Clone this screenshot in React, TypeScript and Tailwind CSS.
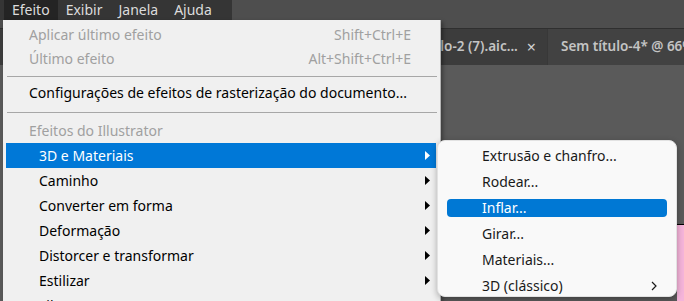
import type { ReactNode } from 'react';

const topMenus = ['Efeito', 'Exibir', 'Janela', 'Ajuda'];

const illustratorItems = [
  'Caminho',
  'Converter em forma',
  'Deformação',
  'Distorcer e transformar',
  'Estilizar',
  'Filtros SVG',
];

const subItems = ['Extrusão e chanfro...', 'Rodear...', 'Inflar...', 'Girar...', 'Materiais...'];

function Arrow({ white }: { white?: boolean }) {
  return (
    <svg width="5" height="9" viewBox="0 0 5 9" className="shrink-0">
      <polygon points="0,0 5,4.5 0,9" fill={white ? '#ffffff' : '#000000'} />
    </svg>
  );
}

function Separator() {
  return <div className="ml-[4px] mr-[3px] h-px bg-[#a7a7a7]" />;
}

function Row({ children, className = '' }: { children: ReactNode; className?: string }) {
  return <div className={`flex items-center ${className}`}>{children}</div>;
}

export default function App() {
  return (
    <div className="relative h-[301px] w-[684px] overflow-hidden bg-[#5a5a5a] font-['Noto_Sans',sans-serif] text-[14px] leading-none">
      {/* menu bar */}
      <div className="flex h-[20px] bg-[#4e4e4e]">
        <div className="flex w-[232px] items-stretch bg-[#353535] pl-[4px] text-[#dcdcdc]">
          {topMenus.map((m, i) => (
            <div
              key={m}
              className={`flex items-center px-[8px] ${i === 0 ? 'bg-[#242424]' : ''}`}
            >
              {m}
            </div>
          ))}
        </div>
      </div>
      <div className="h-[9px] border-b border-[#2f2f2f] bg-[#4e4e4e]" />

      {/* document tabs */}
      <div className="flex h-[36px] bg-[#424242] text-[13.5px] font-semibold text-[#c4c4c4]">
        <div className="flex w-[548px] shrink-0 items-center justify-end gap-[9px] border-r border-[#383838] bg-[#3c3c3c] pr-[11px]">
          <span className="whitespace-nowrap">Sem título-2 (7).aic...</span>
          <span className="text-[16px] font-normal text-[#d0d0d0]">×</span>
        </div>
        <div className="flex min-w-0 items-center overflow-hidden whitespace-nowrap pl-[13px]">
          Sem título-4* @ 66% (RGB/Visualizar)
        </div>
      </div>

      {/* canvas */}
      <div className="flex justify-end pt-[159px]">
        <div className="h-[80px] w-[7px] border-t border-black bg-[#f5b4da]" />
      </div>

      {/* Efeito menu */}
      <div className="absolute left-[3px] top-[20px] w-[438px] border-r border-[#b4b4b4] bg-[#f0f0f0] pt-[3px] text-black shadow-[2px_2px_4px_rgba(0,0,0,0.35)]">
        <Row className="h-[24px] justify-between pl-[26px] pr-[29px] text-[#a0a0a0]">
          <span>Aplicar último efeito</span>
          <span>Shift+Ctrl+E</span>
        </Row>
        <Row className="h-[24px] justify-between pl-[26px] pr-[29px] text-[#a0a0a0]">
          <span>Último efeito</span>
          <span>Alt+Shift+Ctrl+E</span>
        </Row>
        <div className="pb-[4px] pt-[5px]">
          <Separator />
        </div>
        <Row className="h-[24px] pl-[26px]">
          Configurações de efeitos de rasterização do documento...
        </Row>
        <div className="pb-[6px] pt-[7px]">
          <Separator />
        </div>
        <Row className="h-[24px] pl-[26px] text-[#a0a0a0]">Efeitos do Illustrator</Row>
        <Row className="ml-[3px] mr-[4px] h-[25px] justify-between bg-[#0078d7] pl-[33px] pr-[6px] text-white">
          <span>3D e Materiais</span>
          <Arrow white />
        </Row>
        {illustratorItems.map((item) => (
          <Row key={item} className="ml-[3px] mr-[4px] h-[25px] justify-between pl-[33px] pr-[6px]">
            <span>{item}</span>
            <Arrow />
          </Row>
        ))}
      </div>

      {/* 3D e Materiais submenu */}
      <div className="absolute left-[437px] top-[140px] h-[157px] w-[240px] rounded-[8px] border border-[#e2e2e2] bg-[#f9f9f9] pt-[2px] text-[#1a1a1a] shadow-[0_2px_6px_rgba(0,0,0,0.3)]">
        {subItems.map((item) => {
          const active = item === 'Inflar...';
          return (
            <div key={item} className="flex h-[26px] items-center px-[9px]">
              <div
                className={`flex h-[18px] w-full items-center rounded-[4px] pl-[35px] ${active ? 'bg-[#0078d4] text-white' : ''}`}
              >
                {item}
              </div>
            </div>
          );
        })}
        <div className="flex h-[26px] items-center justify-between pl-[44px] pr-[19px]">
          <span>3D (clássico)</span>
          <svg width="6" height="10" viewBox="0 0 6 10">
            <path d="M1 1 L5 5 L1 9" fill="none" stroke="#1a1a1a" strokeWidth="1.2" />
          </svg>
        </div>
      </div>
    </div>
  );
}
